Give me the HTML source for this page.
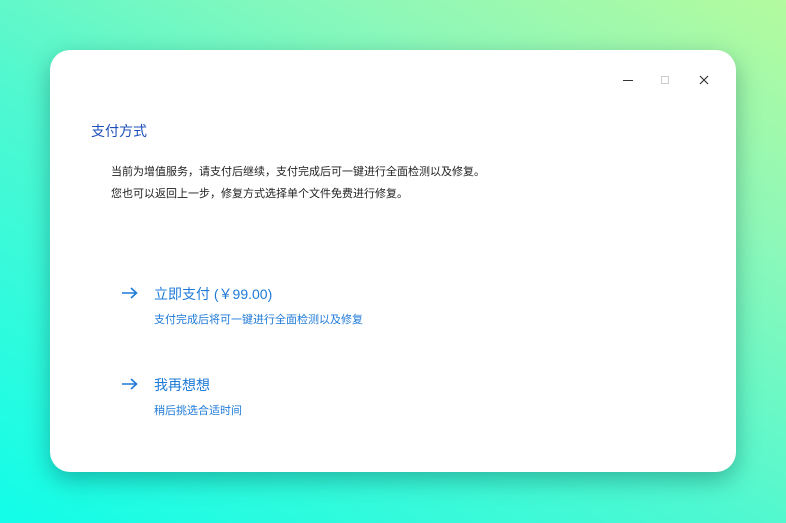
<!DOCTYPE html>
<html><head><meta charset="utf-8"><style>
*{margin:0;padding:0;box-sizing:border-box}
body{width:786px;height:523px;overflow:hidden;font-family:"Liberation Sans","Noto Sans CJK SC",sans-serif;
background:linear-gradient(30deg,#12fde9 0%,#50f8d0 45%,#8ef8b8 75%,#b4fa9e 100%);position:relative}
.card{position:absolute;left:50px;top:50px;width:686px;height:422px;background:#fff;border-radius:20px;box-shadow:0 8px 24px rgba(0,60,60,.35)}
.t{position:absolute;white-space:nowrap}
</style></head><body>
<div class="card">
<div style="position:absolute;left:573px;top:30px;width:10px;height:1px;background:#333"></div>
<div style="position:absolute;left:611px;top:26px;width:8px;height:8px;border:1px solid #ccc"></div>
<svg style="position:absolute;left:649px;top:25px" width="10" height="10"><path d="M1 1L9 9M9 1L1 9" stroke="#333" stroke-width="1.2"/></svg>
<div class="t" style="left:41px;top:71px;font-size:14px;color:#1d4fb8">支付方式</div>
<div class="t" style="left:61px;top:113px;font-size:11px;color:#222">当前为增值服务，请支付后继续，支付完成后可一键进行全面检测以及修复。</div>
<div class="t" style="left:61px;top:135px;font-size:11px;color:#222">您也可以返回上一步，修复方式选择单个文件免费进行修复。</div>
<svg style="position:absolute;left:72px;top:237px" width="16" height="12"><path d="M0 6H14M9 1L14.5 6L9 11" fill="none" stroke="#1e7ad8" stroke-width="1.6"/></svg>
<div class="t" style="left:104px;top:234px;font-size:14px;color:#1e7ad8">立即支付 (￥99.00)</div>
<div class="t" style="left:104px;top:261px;font-size:11px;color:#1e7ad8">支付完成后将可一键进行全面检测以及修复</div>
<svg style="position:absolute;left:72px;top:328px" width="16" height="12"><path d="M0 6H14M9 1L14.5 6L9 11" fill="none" stroke="#1e7ad8" stroke-width="1.6"/></svg>
<div class="t" style="left:104px;top:325px;font-size:14px;color:#1e7ad8">我再想想</div>
<div class="t" style="left:104px;top:352px;font-size:11px;color:#1e7ad8">稍后挑选合适时间</div>
</div>
</body></html>
